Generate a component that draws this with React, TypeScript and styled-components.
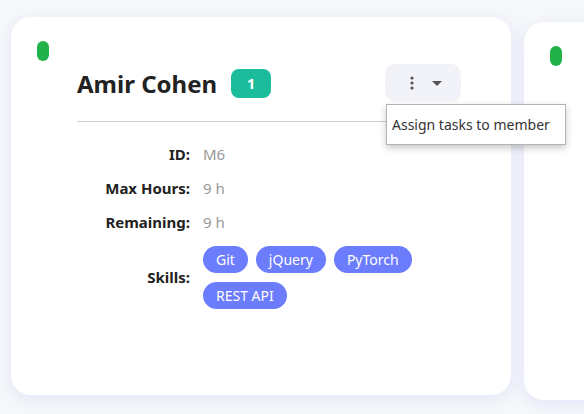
import React from "react";
import styled, { createGlobalStyle } from "styled-components";

const Global = createGlobalStyle`
  html, body { margin: 0; padding: 0; background: #f7f8fa; }
  body { font-family: "Noto Sans", "Open Sans", sans-serif; overflow: hidden; }
  * { box-sizing: border-box; }
`;

const Board = styled.div`
  display: flex;
  gap: 13px;
  padding: 22px 0 0 11px;
  width: 584px;
  height: 414px;
  overflow: hidden;
`;

const Card = styled.div<{ $raised?: boolean }>`
  position: relative;
  z-index: ${(p) => (p.$raised ? 2 : 1)};
  flex: 0 0 500px;
  height: 378px;
  background: #fff;
  border-radius: 20px;
  box-shadow: 0 4px 18px rgba(110, 125, 240, 0.16);
  padding: 47px 50px 0 66px;
  transform: translateY(${(p) => (p.$raised ? "-5px" : "0")});
`;

const Status = styled.span`
  position: absolute;
  top: 24px;
  left: 26px;
  width: 12px;
  height: 20px;
  border-radius: 6px;
  background: #22b24c;
`;

const Header = styled.div`
  display: flex;
  align-items: center;
  height: 38px;
`;

const Name = styled.h2`
  margin: 0;
  font-size: 24px;
  font-weight: 700;
  color: #222;
`;

const Badge = styled.span`
  margin-left: 14px;
  width: 40px;
  height: 29px;
  border-radius: 8px;
  background: #1abc9c;
  color: #fff;
  font-weight: 700;
  font-size: 15px;
  display: flex;
  align-items: center;
  justify-content: center;
`;

const MenuWrap = styled.div`
  position: relative;
  margin-left: auto;
`;

const MenuButton = styled.button`
  width: 76px;
  height: 38px;
  border: none;
  border-radius: 10px;
  background: #f2f3f8;
  display: flex;
  align-items: center;
  justify-content: center;
  gap: 18px;
  padding: 0 0 0 6px;
  color: #555;
`;

const Tooltip = styled.div`
  position: absolute;
  top: 40px;
  left: 1px;
  width: 180px;
  height: 41px;
  background: #fff;
  border: 1px solid #b4b4b4;
  box-shadow: 0 3px 7px rgba(0, 0, 0, 0.22);
  padding: 0 5px;
  display: flex;
  align-items: center;
  font-size: 14px;
  color: #333;
  white-space: nowrap;
  z-index: 2;
`;

const Divider = styled.hr`
  margin: 19px 0 0;
  border: none;
  border-top: 1px solid #d0d0d0;
`;

const Details = styled.div`
  display: grid;
  grid-template-columns: 113px 1fr;
  column-gap: 13px;
  row-gap: 13px;
  margin-top: 22px;
  align-items: center;
`;

const Label = styled.div`
  text-align: right;
  font-size: 15px;
  font-weight: 700;
  color: #222;
  line-height: 21px;
`;

const Value = styled.div`
  font-size: 15px;
  color: #999;
  line-height: 21px;
`;

const Chips = styled.div`
  display: flex;
  flex-wrap: wrap;
  gap: 9px 8px;
`;

const Chip = styled.span`
  height: 27px;
  padding: 0 13px;
  border-radius: 14px;
  background: #6b7cfd;
  color: #fff;
  font-size: 14px;
  display: flex;
  align-items: center;
`;

const Kebab = () => (
  <svg width="4" height="14" viewBox="0 0 4 14" fill="currentColor">
    <circle cx="2" cy="2" r="1.6" />
    <circle cx="2" cy="7" r="1.6" />
    <circle cx="2" cy="12" r="1.6" />
  </svg>
);

const Caret = () => (
  <svg width="10" height="5" viewBox="0 0 10 5" fill="currentColor">
    <path d="M0 0 L10 0 L5 5 Z" />
  </svg>
);

const skills = ["Git", "jQuery", "PyTorch", "REST API"];

export default function App() {
  return (
    <>
      <Global />
      <Board>
        <Card $raised>
          <Status />
          <Header>
            <Name>Amir Cohen</Name>
            <Badge>1</Badge>
            <MenuWrap>
              <MenuButton aria-label="Member actions">
                <Kebab />
                <Caret />
              </MenuButton>
              <Tooltip>Assign tasks to member</Tooltip>
            </MenuWrap>
          </Header>
          <Divider />
          <Details>
            <Label>ID:</Label>
            <Value>M6</Value>
            <Label>Max Hours:</Label>
            <Value>9 h</Value>
            <Label>Remaining:</Label>
            <Value>9 h</Value>
            <Label>Skills:</Label>
            <Chips>
              {skills.map((s) => (
                <Chip key={s}>{s}</Chip>
              ))}
            </Chips>
          </Details>
        </Card>
        <Card>
          <Status />
        </Card>
      </Board>
    </>
  );
}
